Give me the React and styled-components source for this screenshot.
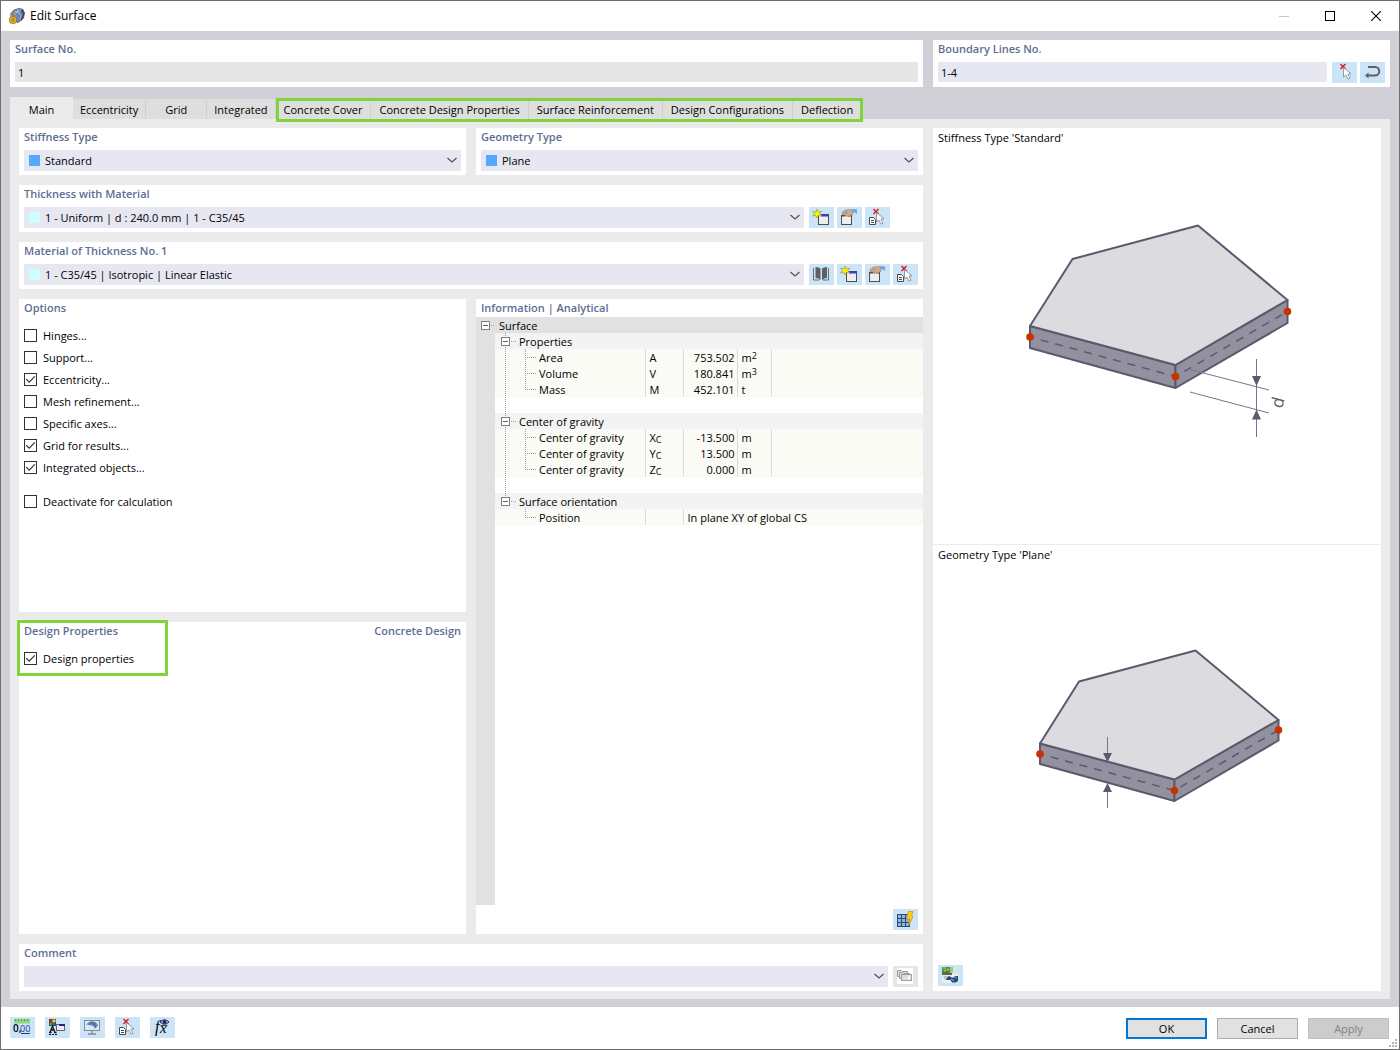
import React, {useState} from "react";
import styled, {createGlobalStyle, css} from "styled-components";

const GlobalStyle = createGlobalStyle`
  *, *::before, *::after {
    box-sizing: border-box;
  }

  body {
    margin: 0;
    background: #ffffff;
  }

  body, button, input, select {
    font-family: "Open Sans", "Noto Sans", sans-serif;
    font-size: 11px;
    color: #000000;
  }
`

const Window = styled.div`
  position: relative;
  display: flex;
  flex-direction: column;
  min-height: 100vh;
  border: 1px solid #6e6e6e;
  background: #ffffff;
`

const TitleBar = styled.header`
  display: flex;
  align-items: center;
  height: 30px;
  padding-left: 8px;
`

const Title = styled.h1`
  flex: 1;
  margin: 0 0 0 5px;
  font-size: 12px;
  font-weight: 400;
  line-height: 16px;
`

const WindowButton = styled.button`
  display: flex;
  align-items: center;
  justify-content: center;
  width: 46px;
  height: 30px;
  padding: 0;
  border: 0;
  background: transparent;
`

const Body = styled.main`
  display: flex;
  flex: 1;
  flex-direction: column;
  padding: 9px 9px 8px;
  background: #d1d0d6;
`

const TopRow = styled.div`
  display: grid;
  grid-template-columns: minmax(0, 1fr) 457px;
  gap: 10px;
`

const Card = styled.section`
  position: relative;
  display: flex;
  flex-direction: column;
  flex: ${props => props.$grow ? "1 1 0" : "none"};
  min-width: 0;
  padding: 0 5px 4px;
  background: #ffffff;
`

const Heading = styled.h2`
  margin: 0;
  font-size: 11px;
  font-weight: 600;
  line-height: 18px;
  color: #5e6d93;
`

const HeadingRow = styled.div`
  display: flex;
  justify-content: space-between;
`

const FieldRow = styled.div`
  display: flex;
  align-items: flex-start;
  gap: 5px;
  margin-top: 4px;
`

const Input = styled.input`
  flex: 1;
  min-width: 0;
  height: 20px;
  padding: 1px 3px 0;
  border: 0;
  background: ${props => props.readOnly ? "#e6e6e6" : "#e7e7f2"};
`

const SelectWrap = styled.div`
  position: relative;
  flex: 1;
  min-width: 0;
  height: 21px;
`

const Select = styled.select`
  width: 100%;
  height: 21px;
  padding: 0 24px 0 21px;
  border: 0;
  border-radius: 0;
  appearance: none;
  background: #e7e7f2;
`

const Swatch = styled.span`
  position: absolute;
  top: 5px;
  left: 5px;
  width: 11px;
  height: 11px;
  background: ${props => props.$color};
  pointer-events: none;
`

const Chevron = styled.svg`
  position: absolute;
  top: 7px;
  right: 4px;
  width: 11px;
  height: 7px;
  pointer-events: none;
`

const IconButton = styled.button`
  display: block;
  width: 25px;
  height: 21px;
  padding: 0;
  border: 0;
  background: ${props => props.disabled ? "#e6e6e6" : "#cce4f7"};

  svg {
    display: block;
  }
`

const IconGroup = styled.div`
  display: grid;
  grid-template-columns: repeat(${props => props.$slots}, 25px);
  gap: 3px;
`

const TabBar = styled.div`
  display: flex;
  align-items: flex-end;
  height: 22px;
  margin-top: 10px;
`

const Tab = styled.button`
  min-width: 61px;
  height: 20px;
  padding: 2px 7px 0;
  border: 0;
  border-right: 1px solid #d0d0d0;
  background: #dedede;
  line-height: 18px;
  white-space: nowrap;

  ${props => props.$active && css`
    min-width: 63px;
    height: 22px;
    padding-top: 4px;
    border-right: 0;
    background: #ebebeb;
  `}
`

const TabGroup = styled.div`
  position: relative;
  display: flex;

  ${Tab} {
    padding-right: 8px;
    padding-left: 8px;
  }
`

const Highlight = styled.div`
  position: absolute;
  inset: ${props => props.$inset};
  border: 3px solid #82d23c;
  pointer-events: none;
`

const Page = styled.div`
  display: grid;
  flex: 1;
  grid-template-columns: minmax(0, 1fr) 448px;
  gap: 10px;
  padding: 9px 9px 8px;
  background: #ebebeb;
`

const Stack = styled.div`
  display: flex;
  flex-direction: column;
  gap: 10px;
  min-width: 0;
`

const Split = styled.div`
  display: grid;
  flex: ${props => props.$grow ? "1 1 0" : "none"};
  grid-template-columns: repeat(2, minmax(0, 1fr));
  gap: 10px;
`

const CheckList = styled.div`
  display: flex;
  flex-direction: column;
  align-items: flex-start;
  gap: 9px;
  padding-top: 12px;
`

const CheckLabel = styled.label`
  display: flex;
  align-items: center;
  gap: 6px;
  height: 13px;
  line-height: 13px;
  margin-top: ${props => props.$separate ? "12px" : "0"};
`

const CheckBox = styled.input`
  width: 13px;
  height: 13px;
  margin: 0;
  border: 1px solid #333333;
  appearance: none;
  background: #ffffff;

  &:checked {
    background-image: url("data:image/svg+xml,%3Csvg xmlns='http://www.w3.org/2000/svg' viewBox='0 0 11 11'%3E%3Cpath d='M1.2 5.2L4.2 8.2L9.8 2.4' fill='none' stroke='%23333' stroke-width='1.2'/%3E%3C/svg%3E");
  }
`

const InfoCard = styled.section`
  display: flex;
  flex-direction: column;
  min-width: 0;
  background: #ffffff;
`

const InfoHeading = styled(Heading)`
  padding: 0 5px;
`

const TreeArea = styled.div`
  flex: 1;
  background: linear-gradient(to right, #e1e1e1 19px, #ffffff 19px);
`

const TreeTable = styled.table`
  width: 100%;
  border-collapse: collapse;
  table-layout: fixed;
`

const rowColors = {
    root: "#e1e1e1",
    group: "#f3f3f3",
    leaf: "#fafbf5",
    blank: "#ffffff"
}

const TreeRow = styled.tr`
  height: 16px;

  td, th {
    height: 16px;
    padding: 0;
    background: ${props => rowColors[props.$kind]};
    font-weight: 400;
    line-height: 14px;
    text-align: left;
    white-space: nowrap;
  }

  td:first-child {
    background: #e1e1e1;
  }
`

const Cell = styled.td`
  && {
    padding: 2px 2px 0 4px;
    border-right: ${props => props.$open ? "0" : "1px solid #dcdcdc"};
    text-align: ${props => props.$align || "left"};
  }
`

const NameCell = styled.th`
  ${props => props.$ruled && css`
    && {
      border-right: 1px solid #dcdcdc;
    }
  `}
`

const TreeName = styled.div`
  display: flex;
  height: 16px;
  line-height: 18px;
`

const Sup = styled.sup`
  font-size: 9px;
  line-height: 0;
  vertical-align: 3px;
`

const Sub = styled.sub`
  font-size: 9px;
  line-height: 0;
  vertical-align: -1px;
`

const InfoTools = styled.div`
  display: flex;
  justify-content: flex-end;
  padding: 4px 5px;
`

const PreviewCard = styled.aside`
  display: flex;
  flex-direction: column;
  background: #ffffff;
`

const Preview = styled.figure`
  display: flex;
  flex: 1;
  flex-direction: column;
  margin: 0;

  & + & {
    border-top: 1px solid #ebebeb;
  }
`

const Caption = styled.figcaption`
  padding: 0 5px;
  line-height: 20px;
`

const Stage = styled.div`
  display: flex;
  flex: 1;
  align-items: center;
  justify-content: center;
`

const PreviewTools = styled.div`
  padding: 4px 5px 5px;
`

const Footer = styled.footer`
  display: flex;
  justify-content: space-between;
  height: 42px;
  padding: 10px 10px 0 9px;
`

const FooterGroup = styled.div`
  display: flex;
  gap: 10px;
  padding-top: ${props => props.$dialog ? "1px" : "0"};
`

const DialogButton = styled.button`
  width: 81px;
  height: 21px;
  padding: 0;
  border: ${props => props.$primary ? "2px solid #0078d7" : "1px solid #adadad"};
  background: #e1e1e1;

  &:disabled {
    border-color: #bfbfbf;
    background: #cccccc;
    color: #838383;
  }
`

const Grip = styled.svg`
  position: absolute;
  right: 2px;
  bottom: 2px;
`

/* icons, all drawn on the 25x21 face of a tool button */

const Face = ({children}) => (
    <svg width="25" height="21" viewBox="0 0 25 21" aria-hidden="true">{children}</svg>
)

const RedCross = () => (
    <path d="M8.5 2l5 5M13.5 2l-5 5" stroke="#e0101c" strokeWidth="1.4"/>
)

const Cursor = () => (
    <path d="M11.5 5.5v9.5l2.4-2 2.1 4.2 2-1-2.1-4.1 3.1-.3z" fill="#ffffff" stroke="#8b8f96" strokeWidth=".9"/>
)

const PickIcon = () => <Face><RedCross/><Cursor/></Face>

const PickListIcon = () => (
    <Face>
        <path d="M4.5 10.5h4l2 2v5h-6z" fill="#ffffff" stroke="#4a4a4a"/>
        <path d="M6 13.5h3M6 15.5h3" stroke="#4a4a4a"/>
        <RedCross/>
        <Cursor/>
    </Face>
)

const ReturnIcon = () => (
    <Face>
        <path d="M8 5h7a4 4 0 0 1 0 8.5H8" fill="none" stroke="#5d5d62" strokeWidth="2"/>
        <path d="M5 13.5l3.5-3v6z" fill="#5d5d62"/>
    </Face>
)

const NewIcon = () => (
    <Face>
        <rect x="9.5" y="7.5" width="10" height="10" fill="#eeeeee" stroke="#4d4d4d"/>
        <path d="M12 8.5h7" stroke="#2b3de0" strokeWidth="2"/>
        <path d="M8 2l1.200 3 3.800-.8L10.500 6.500l2.500 2.500-3.700-.6L8 11 6.800 8.400 3.500 9l2.200-2.500L3.500 4.200l3.300.8z" fill="#fff200" stroke="#8c9138" strokeWidth=".6"/>
    </Face>
)

const EditIcon = () => (
    <Face>
        <rect x="4.5" y="8.5" width="10" height="9" fill="#eeeeee" stroke="#4d4d4d"/>
        <path d="M5 8.5h3M11 8.5h3" stroke="#4d4d4d" strokeWidth="2"/>
        <path d="M5 5.500L8.500 3l6-.5 1.500 1v4l-2.500 1-1 1.500-1.500-1.500-1.500 1.500-1.500-2L5.500 8z" fill="#cdab8e" stroke="#8d7766" strokeWidth=".5"/>
        <path d="M7 5.500l3-1M8 7l3-1.500" stroke="#a08068" strokeWidth=".6"/>
        <path d="M14 2.500l3-.5 3 .5V7l-2-1.500-2.500-.5z" fill="#78a2d6"/>
    </Face>
)

const BookIcon = () => (
    <Face>
        <path d="M6.500 3q3.500 0 5 1.500V16q-2-2-5-2zM18 3q-3.500 0-5 1.500V16q2-2 5-2z" fill="#5f5f63"/>
        <path d="M4.500 4v12H10M19.500 4v12H14" fill="none" stroke="#5f5f63" strokeWidth=".9"/>
    </Face>
)

const GridBoltIcon = () => (
    <Face>
        <rect x="4.5" y="5.5" width="12" height="12" fill="#8fb6e2" stroke="#2d4a72"/>
        <path d="M8.500 5.500v12M12.500 5.500v12M4.500 9.500h12M4.500 13.500h12" stroke="#2d4a72"/>
        <path d="M15.500 2.500H20L18.500 7.500h1.500l-4.500 9.500 1-7h-3z" fill="#ffcc1f" stroke="#c98a1c" strokeWidth=".7"/>
    </Face>
)

const CommentsIcon = () => (
    <Face>
        <rect x="4" y="2" width="16" height="16" fill="#ffffff"/>
        <path d="M4.500 4.500h4l1 1h5v5h-10z" fill="#dedede" stroke="#9d9d9d"/>
        <path d="M6.500 6.500h3l1 1h6v5h-10z" fill="#dedede" stroke="#9d9d9d"/>
        <rect x="8.5" y="8.5" width="10" height="6" fill="#dedede" stroke="#9d9d9d"/>
        <path d="M15 13l2-2.500" stroke="#ffffff" strokeWidth="2"/>
    </Face>
)

const PictureIcon = () => (
    <Face>
        <rect x="4" y="2" width="16" height="16" fill="#e9eff0"/>
        <path d="M4 2h8v5H4z" fill="#4e8f3c"/>
        <path d="M4 7h10v3H4z" fill="#5d6a50"/>
        <path d="M12 2h3v6h-3z" fill="#9cc39c"/>
        <path d="M15 2h5v7h-5z" fill="#d6e8dc"/>
        <path d="M5 3h2.500M9 4l2 1" stroke="#8fd85a" strokeWidth="1.500"/>
        <path d="M6 6l2-1" stroke="#f2a52c" strokeWidth="1.500"/>
        <path d="M5 11h6l1 4H7z" fill="#b9bec8"/>
        <path d="M11 11l3 1.500h2l1-1.500h3v5l-2 1.500h-4l-1.500-2.500L8 15l1-2z" fill="#2c4a75"/>
        <path d="M13 14l3 1.500M17 13l1.500-1" stroke="#79a7dc" strokeWidth="1.300"/>
    </Face>
)

const UnitsIcon = () => (
    <Face>
        <rect x="4" y="2" width="16" height="4.500" fill="#8fd67d"/>
        <path d="M5.500 2v2M8.500 2v2M11.500 2v2M14.500 2v2M17.500 2v2" stroke="#5a9c50"/>
        <text x="3" y="15" fontFamily="Open Sans, sans-serif" fontSize="10" fontWeight="600">0,</text>
        <text x="10" y="15" fontFamily="Open Sans, sans-serif" fontSize="9" fill="#23388a">00</text>
        <path d="M11 16.500h9" stroke="#23388a"/>
    </Face>
)

const DisplayIcon = () => (
    <Face>
        <rect x="4" y="2" width="7" height="7" fill="#303030"/>
        <rect x="4.5" y="2.5" width="3" height="3" fill="#ee1c1c"/>
        <rect x="7.5" y="2.5" width="3" height="3" fill="#f7e600"/>
        <rect x="4.5" y="5.5" width="3" height="3" fill="#22b14c"/>
        <rect x="7.5" y="5.5" width="3" height="3" fill="#3556ee"/>
        <path d="M5 15.500l2.500-6.500 2.500 6.500M6 13h3M4 15.500h2.500M9 15.500h2.500" fill="none" stroke="#151515" strokeWidth="1.300"/>
        <path d="M4 17.500h2M7 17.500h2M10 17.500h2" stroke="#151515"/>
        <rect x="11.5" y="7.5" width="8" height="6" fill="#eeeeee" stroke="#666666"/>
        <path d="M14 8h6" stroke="#1b2a86" strokeWidth="2"/>
    </Face>
)

const MonitorIcon = () => (
    <Face>
        <rect x="4.5" y="3.5" width="15" height="10" fill="#d8eafa" stroke="#858a90"/>
        <path d="M12 13.500V17M8 17h8" stroke="#858a90" strokeWidth="1.300"/>
        <path d="M6 7.500Q9 4 13 4.500q4 .5 5 4L14.500 12q0-3-2.500-3.500T6 7.500z" fill="#6689b4"/>
        <path d="M10 5q5 .5 6 5.500M8.500 8L12 4.500M12 8.500l3.500-3" fill="none" stroke="#39577f" strokeWidth=".6"/>
    </Face>
)

const FormulaIcon = () => (
    <Face>
        <text x="5" y="15" fontFamily="Liberation Serif, serif" fontSize="16" fontStyle="italic">f</text>
        <text x="10" y="16" fontFamily="Liberation Serif, serif" fontSize="15" fontStyle="italic">x</text>
        <path d="M10.500 8.500h7" stroke="#222222" strokeWidth=".8"/>
        <path d="M10 5q4.500-4.500 9 0-4.500 4.500-9 0z" fill="#c8cbe8" stroke="#1e2457"/>
        <circle cx="14.5" cy="5" r="2" fill="#1e2457"/>
    </Face>
)

const AppIcon = () => (
    <svg width="16" height="16" viewBox="0 0 16 16" aria-hidden="true">
        <path d="M1.500 6L5 2l5-1.500 4 1L15.500 5l-1 5-3 3L8 14.500z" fill="#6d86b0" stroke="#3e4c69" strokeWidth=".8"/>
        <path d="M5 3l4 1 3 3.500-1 5M9 1l-1 3-3 3M12 1.500L9 4" fill="none" stroke="#b8c8e2" strokeWidth=".8"/>
        <path d="M12.500 2l2 3-1 4.500-1.500 2.500" fill="none" stroke="#3b455b" strokeWidth="1.500"/>
        <path d="M2 9V7.500a2 2 0 0 1 4 0V9" fill="none" stroke="#b49542" strokeWidth="1.200"/>
        <rect x=".5" y="8.500" width="7" height="7" rx="2.500" fill="#e5b62d" stroke="#8b713a" strokeWidth=".7"/>
        <path d="M2.500 11h3M2.500 13h3" stroke="#7d652d"/>
    </svg>
)

/* slab drawings of the preview column */

const INK = "#5b596c"

const Slab = ({top, left, right, nodes}) => (
    <>
        <g stroke={INK} strokeWidth="2" strokeLinejoin="round">
            <polygon points={left} fill="#93919f"/>
            <polygon points={right} fill="#93919f"/>
            <polygon points={top} fill="#dcdbe0"/>
        </g>
        <polyline points={nodes.map(n => n.join(",")).join(" ")} fill="none" stroke={INK} strokeWidth="1.5" strokeDasharray="8 7" strokeDashoffset="4"/>
        {nodes.map(([x, y]) => <circle key={x} cx={x} cy={y} r="3.8" fill="#c83200"/>)}
    </>
)

const StandardDrawing = () => (
    <svg width="272" height="248" viewBox="0 0 272 248" role="img" aria-label="Standard">
        <Slab
            top="9,104 51.5,37 177,3.5 266.5,78 154.5,143"
            left="9,104 154.5,143 154.5,166 9,126"
            right="154.5,143 266.5,78 266.5,101 154.5,166"
            nodes={[[9, 115], [154.5, 154.5], [266.5, 89.5]]}
        />
        <path d="M167 147l81 21M169 170l79 21M235.5 137v78" stroke="#77758a"/>
        <path d="M231 154h9l-4.5 10zM231 197.5h9l-4.5-10z" fill={INK}/>
        <text transform="translate(261 187) rotate(-75)" fontFamily="Open Sans, sans-serif" fontSize="17" fill={INK}>d</text>
    </svg>
)

const PlaneDrawing = () => (
    <svg width="272" height="248" viewBox="0 0 272 248" role="img" aria-label="Plane">
        <Slab
            top="19,104.5 58,42.5 174.5,11.5 257.5,81 153.5,140.5"
            left="19,104.5 153.5,140.5 153.5,162 19,125"
            right="153.5,140.5 257.5,81 257.5,101.5 153.5,162"
            nodes={[[19, 115], [153.5, 151.5], [257.5, 91]]}
        />
        <path d="M86.5 98v20M86.5 149v20" stroke="#77758a"/>
        <path d="M82 114h9l-4.5 9zM82 153h9l-4.5-9z" fill={INK}/>
    </svg>
)

/* small form pieces */

const Combo = ({label, value, color}) => (
    <SelectWrap>
        <Select aria-label={label} defaultValue={value}>
            <option>{value}</option>
        </Select>
        {color && <Swatch $color={color}/>}
        <Chevron viewBox="0 0 11 7">
            <path d="M1.5 1l4.5 4 4.5-4" fill="none" stroke="#505050" strokeWidth="1.2"/>
        </Chevron>
    </SelectWrap>
)

const Tool = ({label, icon: Icon, disabled}) => (
    <IconButton type="button" aria-label={label} disabled={disabled}><Icon/></IconButton>
)

const Check = ({label, checked, separate}) => (
    <CheckLabel $separate={separate}>
        <CheckBox type="checkbox" defaultChecked={checked}/>
        {label}
    </CheckLabel>
)

const ExpanderSvg = styled.svg`
  display: block;
`

const RootExpander = () => (
    <ExpanderSvg width="19" height="16" viewBox="0 0 19 16">
        <rect x="5.5" y="4.5" width="8" height="8" fill="#ffffff" stroke="#808080"/>
        <path d="M7 8.5h5" stroke="#606060"/>
        <path d="M15 8.5h4" stroke="#a0a0a0" strokeDasharray="1 1"/>
    </ExpanderSvg>
)

// main: trunk from group to group, last: connector ends here
const Guides = ({kind, main, last}) => (
    <svg width={kind === "leaf" ? 44 : 24} height="16" shapeRendering="crispEdges">
        {kind === "group" && <path d={main ? "M10.5 0v16" : "M10.5 0v8"} stroke="#a0a0a0" strokeDasharray="1 1"/>}
        {kind !== "group" && main && <path d="M10.5 0v16" stroke="#a0a0a0" strokeDasharray="1 1"/>}
        {kind === "leaf" && <path d={last ? "M30.5 0v8M30 8.5h12" : "M30.5 0v16M30 8.5h12"} stroke="#a0a0a0" strokeDasharray="1 1"/>}
        {kind === "group" && (
            <>
                <rect x="6.5" y="4.5" width="8" height="8" fill="#ffffff" stroke="#808080"/>
                <path d="M8 8.5h5" stroke="#606060"/>
                <path d="M16 8.5h5" stroke="#a0a0a0" strokeDasharray="1 1"/>
            </>
        )}
    </svg>
)

const rows = [
    {kind: "group", name: "Properties", main: true},
    {kind: "leaf", name: "Area", symbol: "A", value: "753.502", unit: "m", sup: "2", main: true},
    {kind: "leaf", name: "Volume", symbol: "V", value: "180.841", unit: "m", sup: "3", main: true},
    {kind: "leaf", name: "Mass", symbol: "M", value: "452.101", unit: "t", main: true, last: true},
    {kind: "blank", main: true},
    {kind: "group", name: "Center of gravity", main: true},
    {kind: "leaf", name: "Center of gravity", symbol: "X", sub: "C", value: "-13.500", unit: "m", main: true},
    {kind: "leaf", name: "Center of gravity", symbol: "Y", sub: "C", value: "13.500", unit: "m", main: true},
    {kind: "leaf", name: "Center of gravity", symbol: "Z", sub: "C", value: "0.000", unit: "m", main: true, last: true},
    {kind: "blank", main: true},
    {kind: "group", name: "Surface orientation"},
    {kind: "leaf", name: "Position", text: "In plane XY of global CS", last: true}
]

const InfoRow = ({row}) => {
    const name = (
        <TreeName>
            <Guides kind={row.kind} main={row.main} last={row.last}/>
            {row.name}
        </TreeName>
    )

    if (row.kind !== "leaf") {
        return (
            <TreeRow $kind={row.kind}>
                <td/>
                <NameCell colSpan={5}>{name}</NameCell>
            </TreeRow>
        )
    }

    return (
        <TreeRow $kind="leaf">
            <td/>
            <NameCell scope="row" $ruled>{name}</NameCell>
            <Cell>{row.symbol}{row.sub && <Sub>{row.sub}</Sub>}</Cell>
            {row.text ? <Cell colSpan={3} $open>{row.text}</Cell> : (
                <>
                    <Cell $align="right">{row.value}</Cell>
                    <Cell>{row.unit}{row.sup && <Sup>{row.sup}</Sup>}</Cell>
                    <Cell $open/>
                </>
            )}
        </TreeRow>
    )
}

const mainTabs = ["Main", "Eccentricity", "Grid", "Integrated"]
const designTabs = ["Concrete Cover", "Concrete Design Properties", "Surface Reinforcement", "Design Configurations", "Deflection"]

const App = () => {
    const [activeTab, setActiveTab] = useState("Main");

    const renderTab = name => (
        <Tab key={name} type="button" role="tab" aria-selected={activeTab === name} $active={activeTab === name} onClick={() => setActiveTab(name)}>
            {name}
        </Tab>
    )

    return (
        <Window>
            <GlobalStyle/>
            <TitleBar>
                <AppIcon/>
                <Title>Edit Surface</Title>
                <WindowButton type="button" aria-label="Minimize" disabled>
                    <svg width="10" height="10"><path d="M0 5.5h10" stroke="#c8c8c8"/></svg>
                </WindowButton>
                <WindowButton type="button" aria-label="Maximize">
                    <svg width="10" height="10"><rect x=".5" y=".5" width="9" height="9" fill="none" stroke="#000000"/></svg>
                </WindowButton>
                <WindowButton type="button" aria-label="Close">
                    <svg width="10" height="10"><path d="M0 0l10 10M10 0L0 10" stroke="#000000" strokeWidth="1.1"/></svg>
                </WindowButton>
            </TitleBar>

            <Body>
                <TopRow>
                    <Card>
                        <Heading as="label" htmlFor="surface-no">Surface No.</Heading>
                        <FieldRow>
                            <Input id="surface-no" type="text" defaultValue="1" readOnly/>
                        </FieldRow>
                    </Card>
                    <Card>
                        <Heading as="label" htmlFor="boundary-lines">Boundary Lines No.</Heading>
                        <FieldRow>
                            <Input id="boundary-lines" type="text" defaultValue="1-4"/>
                            <IconGroup $slots={2}>
                                <Tool label="Pick lines" icon={PickIcon}/>
                                <Tool label="Reverse" icon={ReturnIcon}/>
                            </IconGroup>
                        </FieldRow>
                    </Card>
                </TopRow>

                <TabBar role="tablist">
                    {mainTabs.map(renderTab)}
                    <TabGroup>
                        {designTabs.map(renderTab)}
                        <Highlight $inset="-1px -1px -3px 0"/>
                    </TabGroup>
                </TabBar>

                <Page>
                    <Stack>
                        <Split>
                            <Card>
                                <Heading>Stiffness Type</Heading>
                                <FieldRow><Combo label="Stiffness Type" value="Standard" color="#55aaff"/></FieldRow>
                            </Card>
                            <Card>
                                <Heading>Geometry Type</Heading>
                                <FieldRow><Combo label="Geometry Type" value="Plane" color="#55aaff"/></FieldRow>
                            </Card>
                        </Split>

                        <Card>
                            <Heading>Thickness with Material</Heading>
                            <FieldRow>
                                <Combo label="Thickness with Material" value="1 - Uniform | d : 240.0 mm | 1 - C35/45" color="#ccffff"/>
                                <IconGroup $slots={4}>
                                    <Tool label="New thickness" icon={NewIcon}/>
                                    <Tool label="Edit thickness" icon={EditIcon}/>
                                    <Tool label="Pick thickness" icon={PickListIcon}/>
                                </IconGroup>
                            </FieldRow>
                        </Card>

                        <Card>
                            <Heading>Material of Thickness No. 1</Heading>
                            <FieldRow>
                                <Combo label="Material of Thickness No. 1" value="1 - C35/45 | Isotropic | Linear Elastic" color="#ccffff"/>
                                <IconGroup $slots={4}>
                                    <Tool label="Material library" icon={BookIcon}/>
                                    <Tool label="New material" icon={NewIcon}/>
                                    <Tool label="Edit material" icon={EditIcon}/>
                                    <Tool label="Pick material" icon={PickListIcon}/>
                                </IconGroup>
                            </FieldRow>
                        </Card>

                        <Split $grow>
                            <Stack>
                                <Card $grow>
                                    <Heading>Options</Heading>
                                    <CheckList>
                                        <Check label="Hinges..."/>
                                        <Check label="Support..."/>
                                        <Check label="Eccentricity..." checked/>
                                        <Check label="Mesh refinement..."/>
                                        <Check label="Specific axes..."/>
                                        <Check label="Grid for results..." checked/>
                                        <Check label="Integrated objects..." checked/>
                                        <Check label="Deactivate for calculation" separate/>
                                    </CheckList>
                                </Card>
                                <Card $grow>
                                    <HeadingRow>
                                        <Heading>Design Properties</Heading>
                                        <Heading>Concrete Design</Heading>
                                    </HeadingRow>
                                    <CheckList>
                                        <Check label="Design properties" checked/>
                                    </CheckList>
                                    <Highlight $inset="-2px calc(100% - 149px) calc(100% - 54px) -2px"/>
                                </Card>
                            </Stack>

                            <InfoCard>
                                <InfoHeading>Information | Analytical</InfoHeading>
                                <TreeArea>
                                    <TreeTable>
                                        <colgroup>
                                            <col width="19"/>
                                            <col width="150"/>
                                            <col width="38"/>
                                            <col width="54"/>
                                            <col width="34"/>
                                            <col/>
                                        </colgroup>
                                        <tbody>
                                            <TreeRow $kind="root">
                                                <td><RootExpander/></td>
                                                <Cell colSpan={5} $open>Surface</Cell>
                                            </TreeRow>
                                            {rows.map((row, i) => <InfoRow key={i} row={row}/>)}
                                        </tbody>
                                    </TreeTable>
                                </TreeArea>
                                <InfoTools>
                                    <Tool label="Recalculate" icon={GridBoltIcon}/>
                                </InfoTools>
                            </InfoCard>
                        </Split>

                        <Card>
                            <Heading>Comment</Heading>
                            <FieldRow>
                                <Combo label="Comment" value=""/>
                                <Tool label="Comment templates" icon={CommentsIcon} disabled/>
                            </FieldRow>
                        </Card>
                    </Stack>

                    <PreviewCard>
                        <Preview>
                            <Caption>Stiffness Type 'Standard'</Caption>
                            <Stage><StandardDrawing/></Stage>
                        </Preview>
                        <Preview>
                            <Caption>Geometry Type 'Plane'</Caption>
                            <Stage><PlaneDrawing/></Stage>
                        </Preview>
                        <PreviewTools>
                            <Tool label="Switch preview" icon={PictureIcon}/>
                        </PreviewTools>
                    </PreviewCard>
                </Page>
            </Body>

            <Footer>
                <FooterGroup>
                    <Tool label="Units" icon={UnitsIcon}/>
                    <Tool label="Display" icon={DisplayIcon}/>
                    <Tool label="View" icon={MonitorIcon}/>
                    <Tool label="Pick" icon={PickListIcon}/>
                    <Tool label="Formula" icon={FormulaIcon}/>
                </FooterGroup>
                <FooterGroup $dialog>
                    <DialogButton type="button" $primary>OK</DialogButton>
                    <DialogButton type="button">Cancel</DialogButton>
                    <DialogButton type="button" disabled>Apply</DialogButton>
                </FooterGroup>
            </Footer>
            <Grip width="8" height="8" viewBox="0 0 8 8">
                <path d="M6 0h2v2H6zM3 3h2v2H3zM6 3h2v2H6zM0 6h2v2H0zM3 6h2v2H3zM6 6h2v2H6z" fill="#b4b4b4"/>
            </Grip>
        </Window>
    )
}

export default App;
